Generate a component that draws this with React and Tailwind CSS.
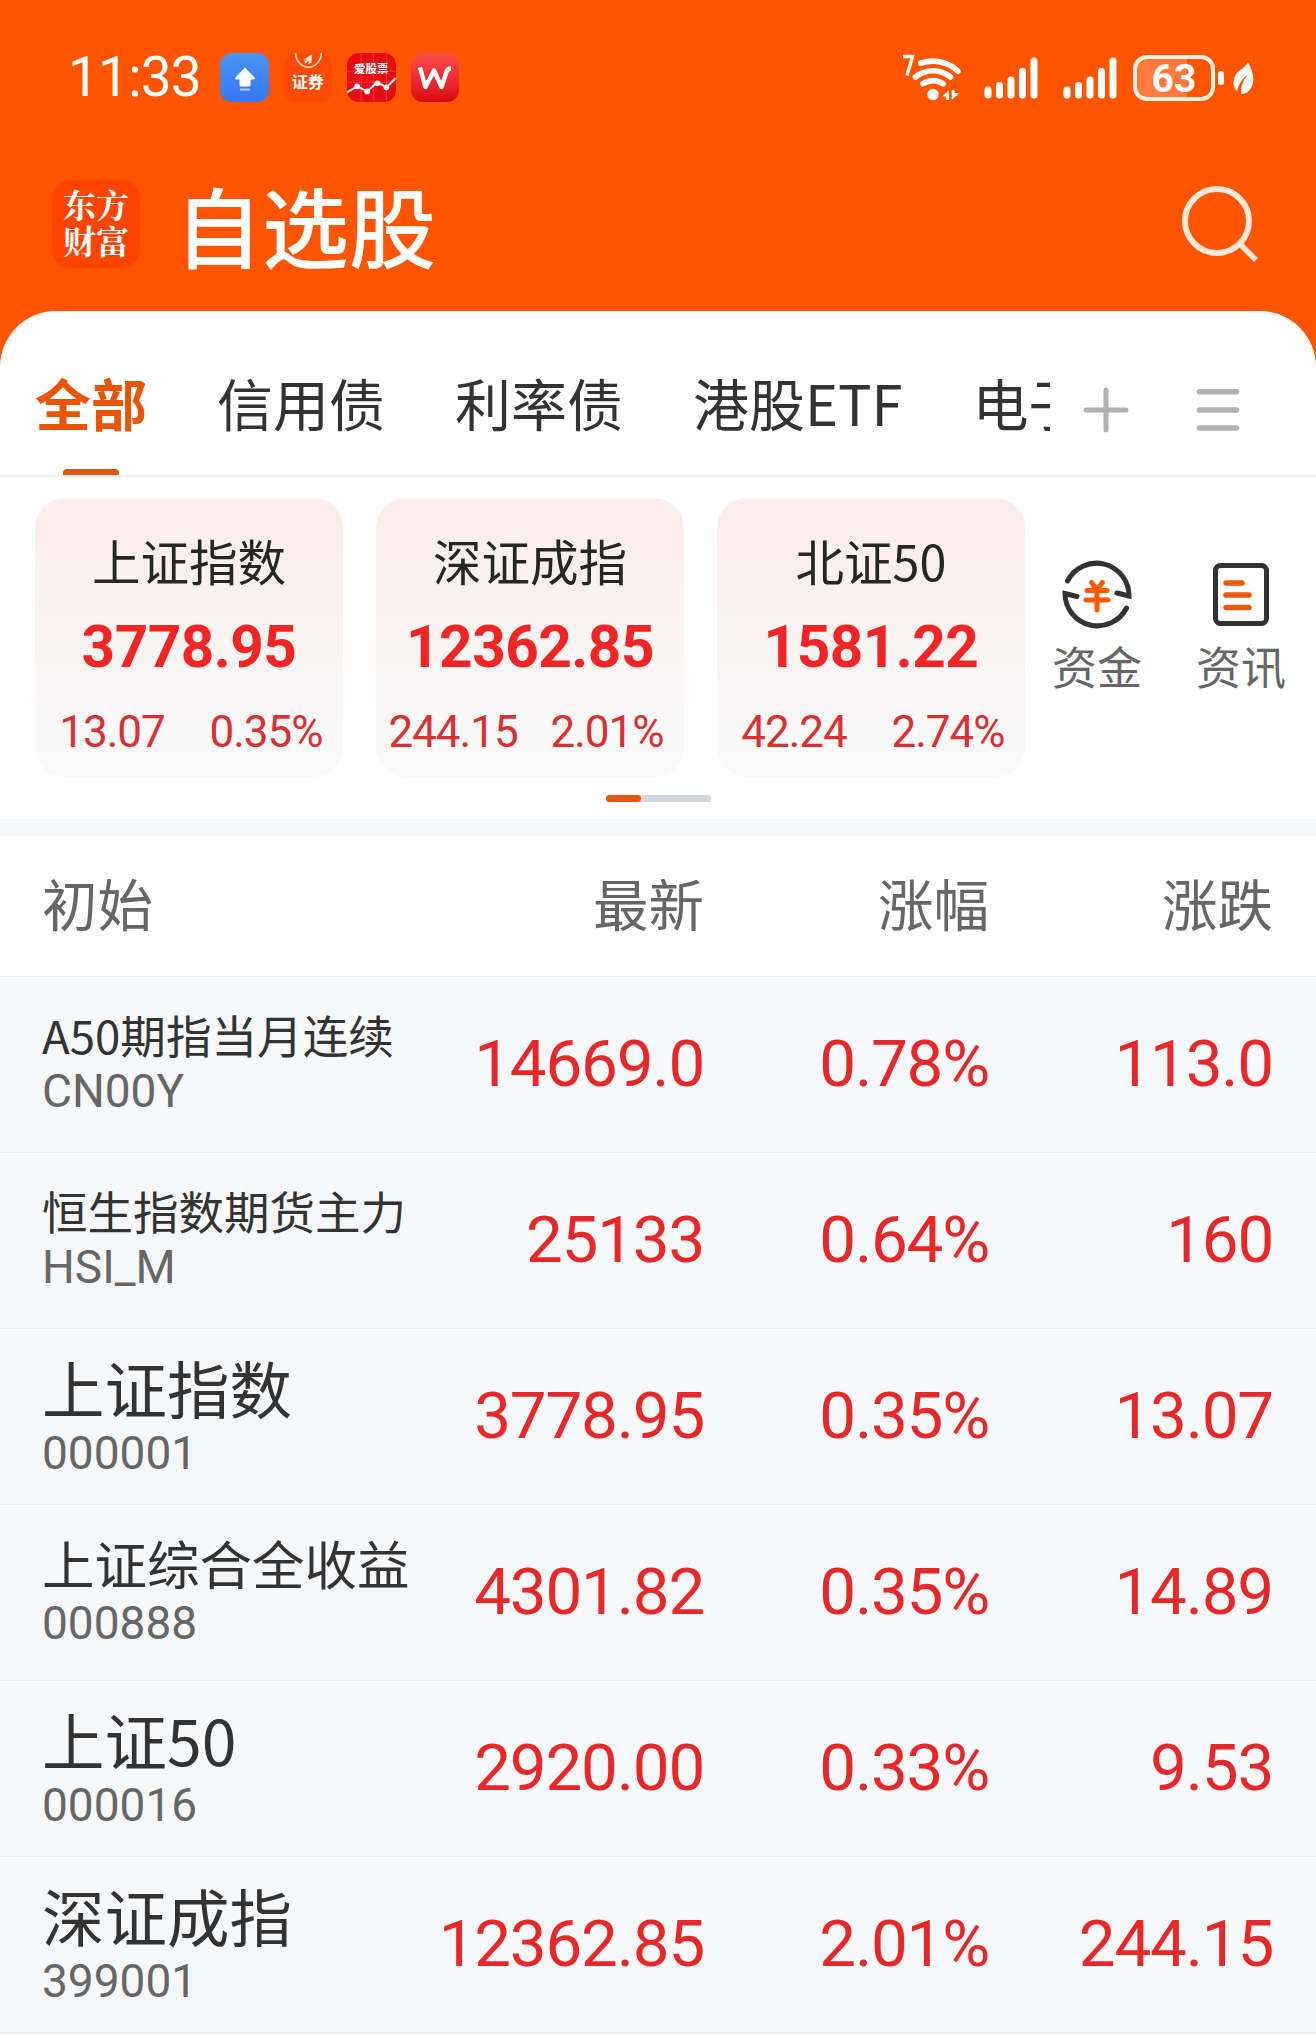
import React from 'react';

const tabs = ['信用债', '利率债', '港股ETF', '电子'];

const indexCards = [
  { name: '上证指数', value: '3778.95', change: '13.07', percent: '0.35%' },
  { name: '深证成指', value: '12362.85', change: '244.15', percent: '2.01%' },
  { name: '北证50', value: '1581.22', change: '42.24', percent: '2.74%' },
];

// long names get a smaller size so that they stay in one line
const stocks = [
  { name: 'A50期指当月连续', size: 'text-[45.6px]', code: 'CN00Y', last: '14669.0', percent: '0.78%', change: '113.0' },
  { name: '恒生指数期货主力', size: 'text-[45.5px]', code: 'HSI_M', last: '25133', percent: '0.64%', change: '160' },
  { name: '上证指数', size: 'text-[62.5px]', code: '000001', last: '3778.95', percent: '0.35%', change: '13.07' },
  { name: '上证综合全收益', size: 'text-[52.5px]', code: '000888', last: '4301.82', percent: '0.35%', change: '14.89' },
  { name: '上证50', size: 'text-[62.5px]', code: '000016', last: '2920.00', percent: '0.33%', change: '9.53' },
  { name: '深证成指', size: 'text-[62.5px]', code: '399001', last: '12362.85', percent: '2.01%', change: '244.15' },
];

function Signal() {
  return (
    <svg className="h-[44px] w-[54px]" viewBox="0 0 54 44" stroke="#fff" strokeWidth="7" strokeLinecap="round">
      <path d="M4 34v5M15.5 29.5v9.5M27 24v15M38.5 15.5v23.5M50 5v34" />
    </svg>
  );
}

function StatusBar() {
  return (
    <div className="flex h-[155px] items-center pl-[68px] pr-[61px] font-['Roboto','Noto_Sans_CJK_SC',sans-serif] text-white">
      <span className="w-[152px] text-[55px] leading-none tracking-[-0.8px]">11:33</span>
      <div className="flex gap-[15px]">
        {/* upload */}
        <div className="flex size-[48.5px] items-center justify-center rounded-[12px] bg-linear-to-b from-[#4a94f2] to-[#3478f6]">
          <svg className="size-[48px]" viewBox="0 0 48 48" fill="#fff">
            <path d="M25 13.5L34.5 23.5q1 2-1 2H30.5V31q0 1.500-1.500 1.500h-8q-1.500 0-1.500-1.500v-5.500H16.500q-2 0-1-2z" />
            <rect x="20" y="34.5" width="10" height="2" opacity=".6" />
          </svg>
        </div>
        {/* securities */}
        <div className="relative size-[48.5px] overflow-hidden rounded-[12px] bg-[#ff4a06]">
          <svg className="absolute inset-0 size-full" viewBox="0 0 48 48" fill="none">
            <path d="M11.5 0a12.700 14 0 0 0 25.400 0" stroke="#ffd9c8" strokeWidth="1.6" />
            <path d="M19 7l9-6-1 9-3 1 1-4-4 4-1-3 3-2z" fill="#ffe6da" />
          </svg>
          <span className="absolute left-0 top-[21px] w-full text-center text-[16px] font-bold leading-[18px]">证券</span>
        </div>
        {/* stocks */}
        <div className="relative size-[48.5px] overflow-hidden rounded-[12px] bg-[#e50d12]">
          <svg className="absolute inset-0 size-full" viewBox="0 0 48 48" fill="none">
            <path d="M0 18h48M0 29h48M14 0v48M26 0v48M39 0v48" stroke="#f03a3a" strokeWidth="1" />
            <path d="M0 39l10-6 10 5 10-9 9 5 9-9" stroke="#fff" strokeWidth="2" />
            <g fill="#fff">
              <circle cx="10" cy="33" r="2.8" />
              <circle cx="20" cy="38" r="2.8" />
              <circle cx="30" cy="30" r="2.8" />
              <circle cx="39" cy="34" r="2.8" />
            </g>
          </svg>
          <span className="absolute left-0 top-[10px] w-full text-center text-[11.5px] font-bold leading-[13px]">爱股票</span>
        </div>
        {/* W */}
        <div className="flex size-[48.5px] items-center justify-center rounded-[12px] bg-linear-to-b from-[#fb5048] via-[#f22a38] to-[#d80808]">
          <svg className="size-[48px]" viewBox="0 0 48 48" fill="none" stroke="#fff" strokeWidth="4.4" strokeLinejoin="round">
            <path d="M9 13.5L14.5 33 23 16.5 30.5 33 35.5 18q1-3.500 4.500-3.500" />
          </svg>
        </div>
      </div>

      <div className="ml-auto flex items-center">
        {/* wifi 7 */}
        <svg className="mr-[21px] h-[50px] w-[61px]" viewBox="0 0 61 50" fill="none" stroke="#fff">
          <path d="M1 3.5h9.500L5 22.5" strokeWidth="3.4" />
          <path
            d="M18.7 10.2A37 37 0 0 1 56 18.2M13.5 24A27.5 27.5 0 0 1 48.5 24M21 30.8A17.5 17.5 0 0 1 41 30.8"
            strokeWidth="5.6"
            strokeLinecap="round"
          />
          <circle cx="31" cy="41.5" r="5.7" fill="#fff" stroke="none" />
          <path d="M47 37v10h-2.800v-3.500h-4zM49.7 47V37h2.800v3h5z" fill="#fff" stroke="none" />
        </svg>
        <Signal />
        <div className="w-[25px]" />
        <Signal />
        <div className="ml-[16px] flex h-[46px] w-[82px] items-center justify-center rounded-[14px] border-[4px] border-[#fff1e0] bg-linear-to-r from-[#ff7a3c] from-68% to-[#ff5500] to-68%">
          <span className="pt-[2px] text-[39px] font-bold leading-[38px]">63</span>
        </div>
        <div className="ml-[3px] h-[14px] w-[6px] rounded-full bg-white" />
        <svg className="ml-[8px] mt-[2px] h-[35px] w-[23px]" viewBox="0 0 23 36">
          <path d="M16 1c5 9 8 19 3 27-3 5-7 6-10 6 0-9 2-14 7-20C10 18 6 25 5 31 0 27 0 18 5 12 9 8 14 6 16 1z" fill="#fff" />
        </svg>
      </div>
    </div>
  );
}

function Header() {
  return (
    <div className="flex h-[156px] items-center pl-[52px] pr-[56px]">
      <div className="mt-[-18px] flex size-[88px] flex-col items-center justify-center rounded-[18px] bg-[#ff4400] pb-[4px] font-['Noto_Serif_CJK_SC','Noto_Sans_CJK_SC',sans-serif] text-[33px] font-bold leading-[36px] text-white">
        <span>东方</span>
        <span>财富</span>
      </div>
      <h1 className="ml-[35px] mt-[-18px] text-[87px] font-medium leading-none text-white">自选股</h1>
      <svg className="ml-auto mt-[-18px] size-[80px]" viewBox="0 0 80 80" fill="none" stroke="#ffe8d8" strokeWidth="6">
        <circle cx="37" cy="37" r="32" />
        <path d="M60 60L76 76" strokeWidth="5.5" />
      </svg>
    </div>
  );
}

function TabBar() {
  return (
    <div className="flex h-[166px] border-b-2 border-[#eeeeee] text-[#333333]">
      <div className="flex w-[1050px] shrink-0 items-start gap-[70px] overflow-hidden whitespace-nowrap pl-[35px] text-[56px]">
        <div className="relative flex h-[164px] flex-col items-center pt-[56px]">
          <span className="font-bold leading-[70px] text-[#ea5504]">全部</span>
          <span className="absolute bottom-0 h-[6px] w-[56px] rounded-t-[4px] bg-[#dd5710]" />
        </div>
        {tabs.map((tab) => (
          <span key={tab} className="pt-[56px] leading-[70px]">{tab}</span>
        ))}
      </div>
      <svg className="ml-[33px] mt-[76px] size-[46px]" viewBox="0 0 46 46" stroke="#b2b2b2" strokeWidth="5" strokeLinecap="round">
        <path d="M23 3v40M3 23h40" />
      </svg>
      <svg className="ml-[66px] mt-[76px] size-[46px]" viewBox="0 0 46 46" stroke="#b2b2b2" strokeWidth="5.5" strokeLinecap="round">
        <path d="M4.500 4.700h37M4.500 23h37M4.500 41h37" />
      </svg>
    </div>
  );
}

function IndexCard({ card }) {
  return (
    <div className="flex h-[279px] w-[308px] flex-col items-center rounded-[30px] bg-linear-to-b from-[#fdecec] via-[#f8f5f5] via-60% to-[#fafafa]">
      <span className="mt-[32px] text-[48.5px] leading-[60px] text-[#262626]">{card.name}</span>
      <span className="mt-[27px] font-['Roboto'] text-[58.5px] font-bold leading-[60px] tracking-[-0.5px] text-[#f22424]">
        {card.value}
      </span>
      <div className="mt-[30px] grid w-full grid-cols-2 text-center font-['Roboto'] text-[44px] leading-[50px] tracking-[-1px] text-[#d93030]">
        <span>{card.change}</span>
        <span>{card.percent}</span>
      </div>
    </div>
  );
}

function Indexes() {
  return (
    <div className="h-[342px] pt-[21px]">
      <div className="flex pl-[35px]">
        <div className="flex gap-[33px]">
          {indexCards.map((card) => (
            <IndexCard key={card.name} card={card} />
          ))}
        </div>
        <div className="ml-[27px] mt-[60px] flex gap-[54px] text-[45px] leading-[56px] text-[#666666]">
          <div className="flex w-[90px] flex-col items-center">
            <svg className="h-[73px] w-[72px]" viewBox="0 0 72 73" fill="none" stroke="#333" strokeWidth="5" strokeLinecap="round">
              <path d="M6.500 23A32.500 32.500 0 0 1 68 38L56 35" />
              <path d="M65.500 50A32.500 32.500 0 0 1 4 35.500l12 3" />
              <path d="M30.500 24.500l5.500 7 5.500-7M26 32.500h20M25 42h22M36 32v20" stroke="#ff5a00" />
            </svg>
            <span className="mt-[7px]">资金</span>
          </div>
          <div className="flex w-[90px] flex-col items-center">
            <svg className="h-[73px] w-[72px]" viewBox="0 0 72 73" fill="none" strokeLinecap="round">
              <rect x="10.5" y="7.5" width="51" height="58" rx="5" stroke="#333" strokeWidth="5" />
              <path d="M21 25h16M21 37h23M21 49.500h23" stroke="#ee5a10" strokeWidth="5.5" />
            </svg>
            <span className="mt-[7px]">资讯</span>
          </div>
        </div>
      </div>
      <div className="mx-auto mt-[18px] h-[7px] w-[105px] rounded-full bg-[#d3d6dc]">
        <div className="h-full w-[35px] rounded-full bg-[#e5560c]" />
      </div>
    </div>
  );
}

export default function App() {
  return (
    <div className="h-[2034px] w-[1316px] overflow-hidden bg-[#ff5500] font-['Noto_Sans_CJK_SC',sans-serif]">
      <StatusBar />
      <Header />

      <main className="rounded-t-[56px] bg-white">
        <TabBar />
        <Indexes />
        <div className="h-[17px] bg-[#f7f8fa]" />

        {/* table head */}
        <div className="flex h-[140px] items-center pb-[7px] pl-[42px] text-[55.5px] text-[#666666]">
          <span className="w-[380px]">初始</span>
          <span className="w-[282px] text-right">最新</span>
          <span className="w-[285px] text-right">涨幅</span>
          <span className="w-[284px] text-right">涨跌</span>
        </div>

        {stocks.map((stock) => (
          <div
            key={stock.code}
            className="flex h-[176px] items-center border-t border-[#ebecee] bg-[#f7f8fa] pb-[2px] pl-[42px] font-['Roboto'] text-[65.5px] tracking-[-1.2px] text-[#e82828]"
          >
            <div className="flex w-[380px] shrink-0 flex-col whitespace-nowrap tracking-normal">
              <span className={`${stock.size} font-['Noto_Sans_CJK_SC',sans-serif] leading-[1.2] text-[#333333]`}>
                {stock.name}
              </span>
              <span className="text-[46px] leading-[58px] text-[#666666]">{stock.code}</span>
            </div>
            <span className="w-[282px] text-right leading-[80px]">{stock.last}</span>
            <span className="w-[285px] text-right leading-[80px]">{stock.percent}</span>
            <span className="w-[284px] text-right leading-[80px]">{stock.change}</span>
          </div>
        ))}
        <div className="h-[2px] border-t border-[#ebecee] bg-[#f7f8fa]" />
      </main>
    </div>
  );
}
